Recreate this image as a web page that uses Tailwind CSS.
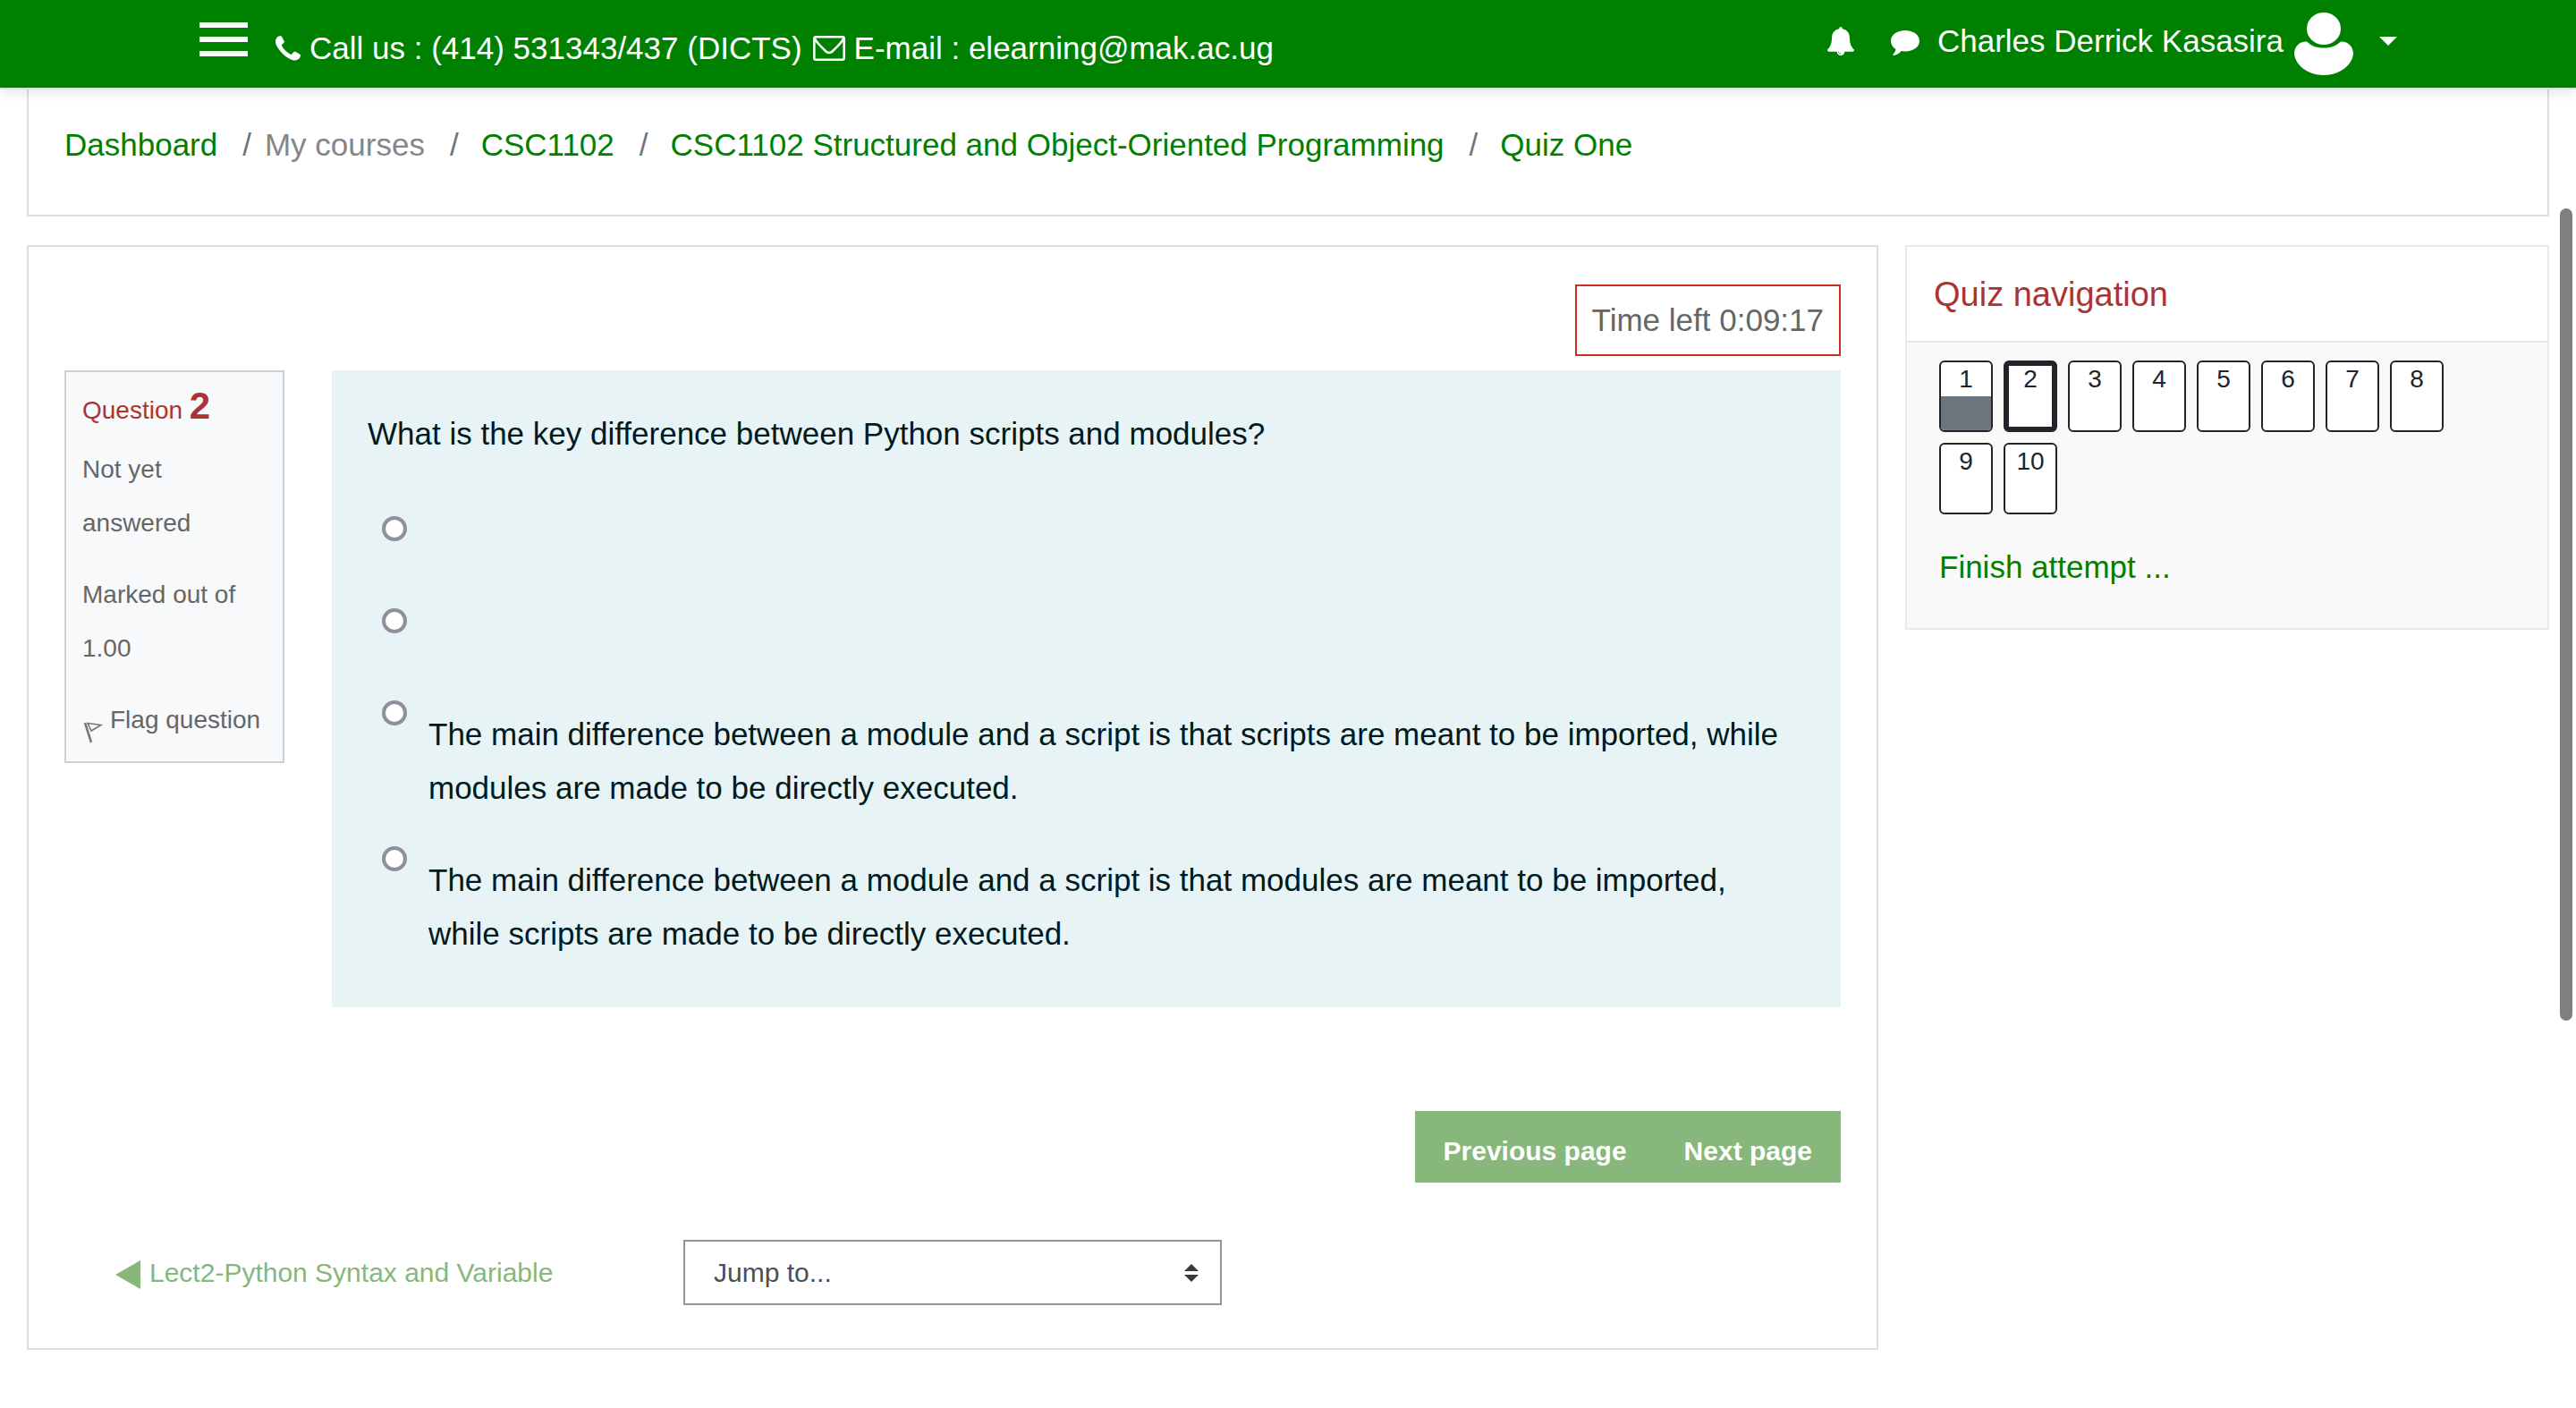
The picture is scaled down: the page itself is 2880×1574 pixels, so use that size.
<!DOCTYPE html>
<html lang="en">
<head>
<meta charset="utf-8">
<meta name="viewport" content="width=device-width, initial-scale=1">
<title>Quiz One</title>
<script src="https://cdn.jsdelivr.net/npm/@tailwindcss/browser@4"></script>
</head>
<body class="bg-white font-['Liberation_Sans',Arial,sans-serif] text-[35px] leading-[60px] text-[#666666]">

<header class="relative z-10 flex justify-between border-b-2 border-[#dedede] bg-[#008000] pr-[200px] pl-[223px] text-white shadow-[0_4px_12px_rgba(0,0,0,0.1)]">
  <div class="flex items-start">
    <button type="button" aria-label="Toggle menu" class="mt-[25px] flex w-[54px] flex-col gap-[10px]">
      <span class="h-[6px] w-full bg-white"></span>
      <span class="h-[6px] w-full bg-white"></span>
      <span class="h-[6px] w-full bg-white"></span>
    </button>
    <div class="ml-[31px] flex items-center pt-6 pb-[14px]">
      <svg class="size-7" viewBox="0 0 28 28" fill="currentColor" aria-hidden="true"><path d="M28 21.700Q28 22.300 27.500 24Q27.100 25.300 25.300 26.300Q23.400 27.500 21.500 27.500Q20.300 27.500 18.700 27Q16.800 26.400 14.800 25.300Q11 23 7.900 19.900T2.500 13.200Q.8 10.500 .4 9Q0 7.500 0 6.500Q0 4.600 1.100 2.800Q2.200 .9 3.500 .5Q5.300 0 6 0Q6.500 0 8 2.700Q9.700 5.800 10 6.600Q10.200 7.200 8.700 8.500Q6.800 9.900 6.800 10.500Q6.800 11.200 8.800 13.900Q11 17 15.900 20.200Q17 20.900 17.500 20.900Q18 20.900 19.500 19Q20.800 17.400 21.300 17.400Q21.800 17.400 25 19.300Q28 21 28 21.700Z"/></svg>
      <span class="ml-[10px]">Call us : (414) 531343/437 (DICTS)</span>
      <svg class="ml-3 h-7 w-9" viewBox="0 0 36 28" fill="none" stroke="currentColor" stroke-width="2.600" stroke-linejoin="round" aria-hidden="true"><rect x="1.300" y="1.300" width="33.400" height="25.400" rx="2"/><path d="M2 3C4 8 9 12 13 16C16 20 20 20 23 16C27 12 32 8 34 3"/></svg>
      <span class="ml-[10px]">E-mail : elearning@mak.ac.ug</span>
    </div>
  </div>
  <div class="flex h-[92px] items-center">
    <button type="button" aria-label="Notifications"><svg class="block h-8 w-[30px]" viewBox="0 0 30 32" aria-hidden="true"><path fill="currentColor" d="M15 0C16.200 0 17 1 16.800 2.300C21.500 3.200 24.500 6.500 24.800 11C25.200 18 26 22 30 25.500C30 27 29.300 27.700 28 27.700H19.200C19.200 30 17.500 32 15 32S10.800 30 10.800 27.700H2C.7 27.700 0 27 0 25.500C4 22 4.800 18 5.200 11C5.500 6.500 8.500 3.200 13.200 2.300C13 1 13.800 0 15 0Z"/><path d="M12.500 27.700C12.500 29.200 13.500 30.200 15 30.200" fill="none" stroke="#008000" stroke-width=".8"/></svg></button>
    <button type="button" aria-label="Messages" class="ml-[41px]"><svg class="mt-1 block h-7 w-8" viewBox="0 0 32 28" fill="currentColor" aria-hidden="true"><path d="M16 0C25 0 32 5 32 11.700S25 23.400 16 23.400C14.500 23.400 13.200 23.300 12 23C9 26 6 27.700 3 28C2.200 28 2 27 2.800 26.200C4.500 24.600 5.200 23.300 5.500 21C2 18.800 0 15.500 0 11.700C0 5 7 0 16 0Z"/></svg></button>
    <span class="ml-5">Charles Derrick Kasasira</span>
    <button type="button" aria-label="User menu" class="ml-3 flex items-center gap-[29px]">
      <svg class="mt-[6px] h-[70px] w-[66px]" viewBox="0 0 66 70" fill="currentColor" aria-hidden="true"><ellipse cx="33" cy="18" rx="19" ry="18"/><path d="M14 32.500C19 37 24 39.500 33 39.500S47 37 52 32.500C60 32 66 38 66 46C65 58 52 70 33 70S1 58 0 46C0 38 6 32 14 32.500Z"/></svg>
      <svg class="h-[10px] w-5" viewBox="0 0 20 10" fill="currentColor" aria-hidden="true"><path d="M0 0H20L10 10Z"/></svg>
    </button>
  </div>
</header>

<div class="px-[30px]">
  <nav aria-label="Breadcrumb" class="border-x-2 border-b-2 border-[#dedede] px-10 pt-8 pb-12">
    <ol class="flex text-[#008000]">
      <li><a href="#">Dashboard</a></li>
      <li class="text-[#868686]"><span class="pr-[15px] pl-7 text-[#6c757d]">/</span>My courses</li>
      <li><span class="pr-[25px] pl-7 text-[#6c757d]">/</span><a href="#">CSC1102</a></li>
      <li><span class="pr-[25px] pl-7 text-[#6c757d]">/</span><a href="#">CSC1102 Structured and Object-Oriented Programming</a></li>
      <li><span class="pr-[25px] pl-7 text-[#6c757d]">/</span><a href="#">Quiz One</a></li>
    </ol>
  </nav>

  <div class="mt-8 flex items-start gap-[30px]">
    <main class="flex-1 border-2 border-[#dedede] px-10 pt-[42px] pb-12">
      <div class="flex justify-end">
        <div role="timer" class="border-2 border-[#ca3120] px-[17px] py-2">Time left 0:09:17</div>
      </div>

      <div class="mt-4 flex items-start gap-[53px]">
        <section class="w-[246px] border-2 border-[#cad0d7] bg-[#f8f9fa] px-[18px] pt-[13px] pb-4 text-[28px]">
          <h3 class="text-[#ab3334]">Question <span class="text-[42px] leading-none font-bold">2</span></h3>
          <p class="mt-[6px]">Not yet answered</p>
          <p class="mt-5">Marked out of 1.00</p>
          <a href="#" class="mt-5 flex items-center whitespace-nowrap">
            <svg class="mt-7 ml-px h-6 w-[22px] shrink-0" viewBox="0 0 22 24" fill="none" stroke="#777777" aria-hidden="true"><path stroke-width="2.500" d="M2 1L9 23"/><path stroke-width="1.600" d="M5 1.500L20 3.500L9 10Z"/></svg>
            <span class="ml-2">Flag question</span>
          </a>
        </section>

        <form class="flex-1 bg-[#e7f3f5] px-10 pt-[41px] pb-[52px] text-[#001a1e]">
          <p>What is the key difference between Python scripts and modules?</p>
          <div class="mt-[62px] flex flex-col gap-[35px] pl-4">
            <div class="flex items-start gap-6">
              <input type="radio" name="answer" id="a1" class="size-7 shrink-0 appearance-none rounded-full border-4 border-[#8f8f9d] bg-white">
              <label for="a1" class="min-h-[68px] flex-1 pt-2"></label>
            </div>
            <div class="flex items-start gap-6">
              <input type="radio" name="answer" id="a2" class="size-7 shrink-0 appearance-none rounded-full border-4 border-[#8f8f9d] bg-white">
              <label for="a2" class="min-h-[68px] flex-1 pt-2"></label>
            </div>
            <div class="flex items-start gap-6">
              <input type="radio" name="answer" id="a3" class="size-7 shrink-0 appearance-none rounded-full border-4 border-[#8f8f9d] bg-white">
              <label for="a3" class="min-h-[68px] flex-1 pt-2">The main difference between a module and a script is that scripts are meant to be imported, while modules are made to be directly executed.</label>
            </div>
            <div class="flex items-start gap-6">
              <input type="radio" name="answer" id="a4" class="size-7 shrink-0 appearance-none rounded-full border-4 border-[#8f8f9d] bg-white">
              <label for="a4" class="min-h-[68px] flex-1 pt-2">The main difference between a module and a script is that modules are meant to be imported, while scripts are made to be directly executed.</label>
            </div>
          </div>
        </form>
      </div>

      <div class="mt-[116px] flex justify-end text-[30px] font-bold text-white">
        <button type="button" class="bg-[#88b77c] px-8 pt-[15px] pb-[5px]">Previous page</button>
        <button type="button" class="bg-[#88b77c] px-8 pt-[15px] pb-[5px]">Next page</button>
      </div>

      <div class="mt-16 grid grid-cols-3 items-center text-[30px]">
        <a href="#" class="flex items-center gap-[10px] pl-[57px] text-[#88b77c]">
          <svg class="mt-1 h-8 w-7" viewBox="0 0 28 32" fill="currentColor" aria-hidden="true"><path d="M28 0V32L0 16Z"/></svg>
          <span>Lect2-Python Syntax and Variable</span>
        </a>
        <div class="px-[30px]">
          <div class="relative">
            <select aria-label="Jump to..." class="block h-[73px] w-full appearance-none border-2 border-[#8f95a0] bg-white pl-8 text-[#495057]"><option>Jump to...</option></select>
            <svg class="pointer-events-none absolute top-1/2 right-[26px] h-5 w-4 -translate-y-1/2" viewBox="0 0 16 20" fill="#343a40" aria-hidden="true"><path d="M0 8L8 0L16 8ZM0 12H16L8 20Z"/></svg>
          </div>
        </div>
      </div>
    </main>

    <aside class="w-[720px] border-2 border-[#e9e9e9]">
      <h2 class="border-b-2 border-[#e9e9e9] px-[30px] pt-[23px] pb-[22px] text-[38px] text-[#ab3334]">Quiz navigation</h2>
      <div class="bg-[#f9f9f9] pt-5 pr-[60px] pb-[38px] pl-9">
        <nav aria-label="Questions" class="flex flex-wrap gap-3 text-center text-[28px] leading-[38px] text-[#212529]">
          <a href="#" class="flex h-20 w-[60px] flex-col overflow-hidden rounded-[6px] border-2 border-[#212529] bg-white"><span class="flex-1">1</span><span class="flex-1 bg-[#6c757d]"></span></a>
          <a href="#" aria-current="page" class="h-20 w-[60px] rounded-[6px] border-[6px] border-[#212529] bg-white leading-[30px]">2</a>
          <a href="#" class="h-20 w-[60px] rounded-[6px] border-2 border-[#212529] bg-white">3</a>
          <a href="#" class="h-20 w-[60px] rounded-[6px] border-2 border-[#212529] bg-white">4</a>
          <a href="#" class="h-20 w-[60px] rounded-[6px] border-2 border-[#212529] bg-white">5</a>
          <a href="#" class="h-20 w-[60px] rounded-[6px] border-2 border-[#212529] bg-white">6</a>
          <a href="#" class="h-20 w-[60px] rounded-[6px] border-2 border-[#212529] bg-white">7</a>
          <a href="#" class="h-20 w-[60px] rounded-[6px] border-2 border-[#212529] bg-white">8</a>
          <a href="#" class="h-20 w-[60px] rounded-[6px] border-2 border-[#212529] bg-white">9</a>
          <a href="#" class="h-20 w-[60px] rounded-[6px] border-2 border-[#212529] bg-white">10</a>
        </nav>
        <a href="#" class="mt-[29px] block text-[#008000]">Finish attempt ...</a>
      </div>
    </aside>
  </div>
</div>

<!-- Scroll thumb floating over the page's right edge -->
<div aria-hidden="true" class="fixed top-[233px] right-1 h-[908px] w-[14px] rounded-full bg-[#7f7f7f]"></div>
</body>
</html>
